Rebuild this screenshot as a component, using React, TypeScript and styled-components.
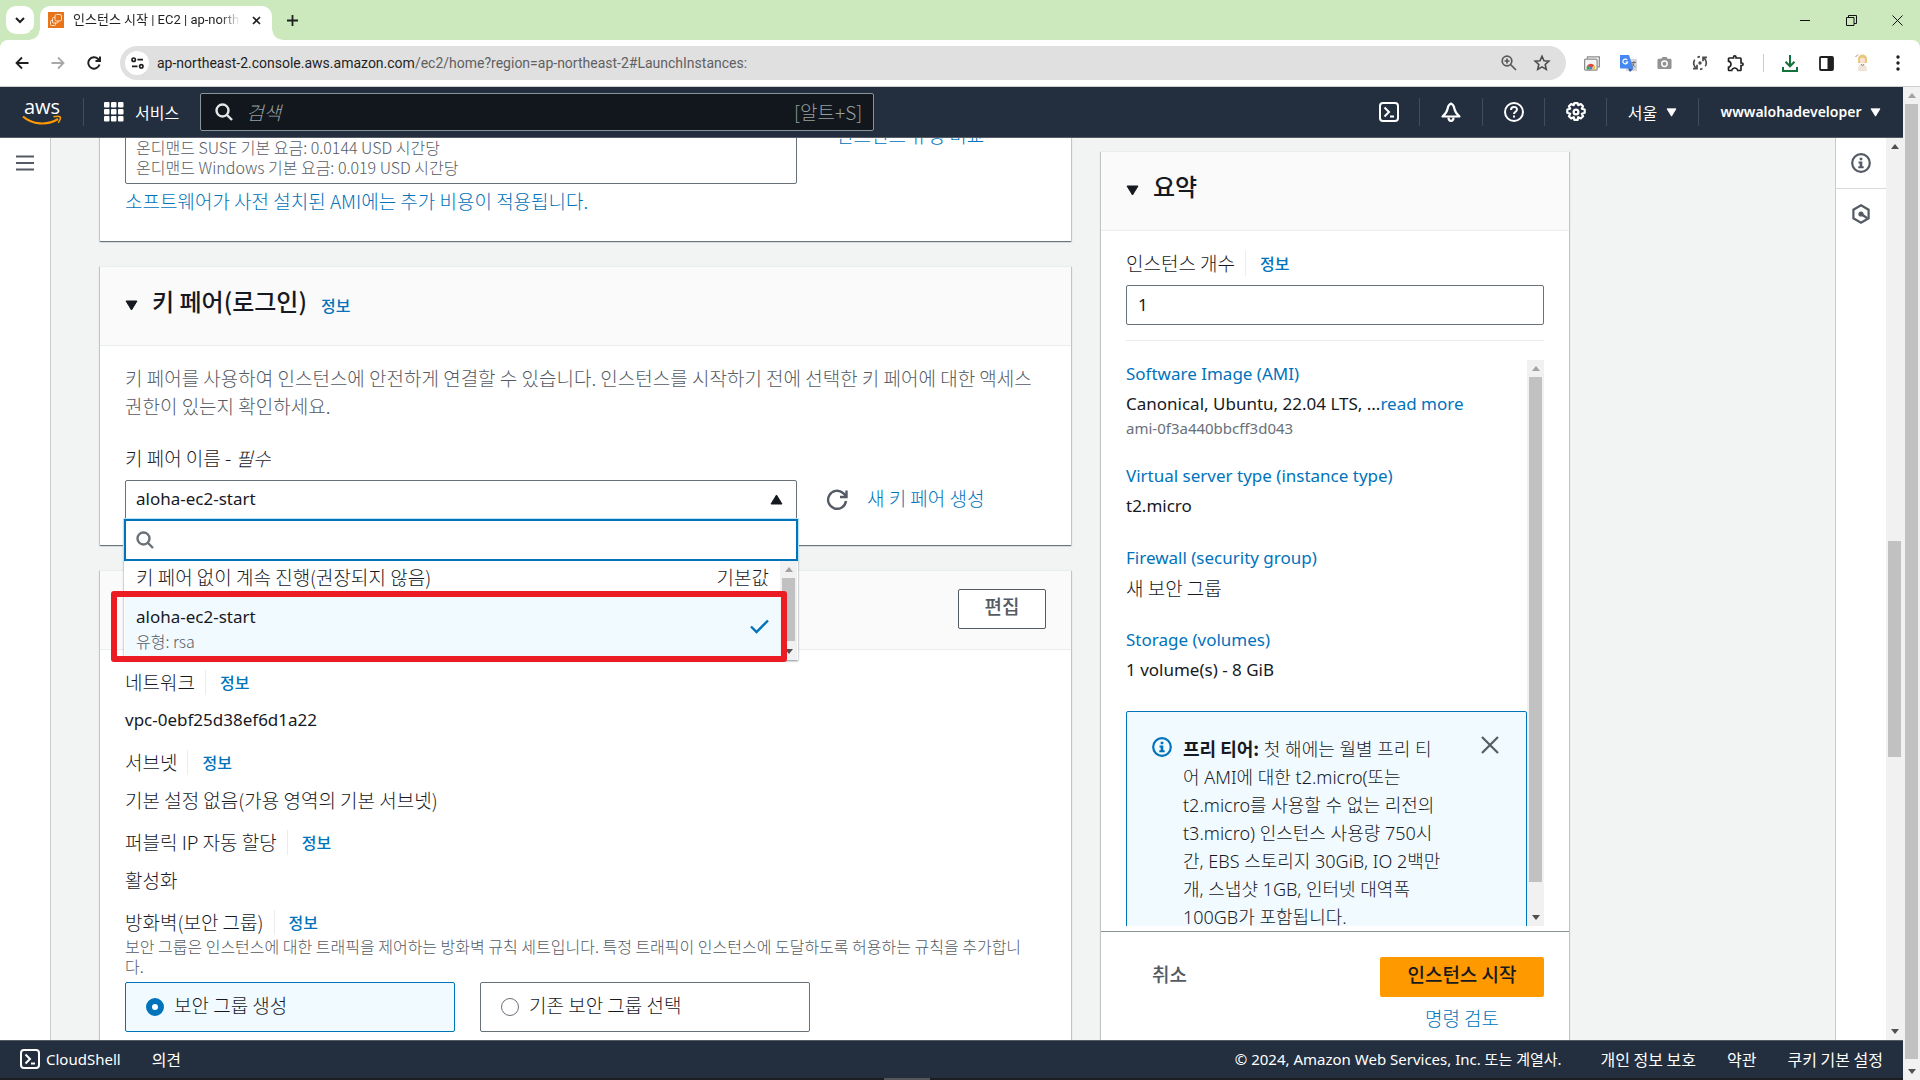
import React from 'react';
import styled, { createGlobalStyle, css } from 'styled-components';
import { MdOutlineExtension } from 'react-icons/md';

const latin = '"Noto Sans", "Noto Sans CJK KR", sans-serif';
const hangul = '"Noto Sans CJK KR", "Noto Sans", sans-serif';

const c = {
  ink: '#16191f',
  gray: '#545b64',
  soft: '#687078',
  link: '#0073bb',
  line: '#eaeded',
  nav: '#232f3e',
};

const GlobalStyle = createGlobalStyle`
  *, *::before, *::after { box-sizing: border-box; }
  body { margin: 0; background: #f2f3f3; color: ${c.ink}; font: 400 17px/28px ${latin}; }
  h2, p, ul, dl, dd { margin: 0; padding: 0; }
  a { color: ${c.link}; text-decoration: none; }
  button, input, select { font: inherit; color: inherit; }
  button { border: 0; background: none; padding: 0; cursor: pointer; }
  svg { display: block; flex: none; }
`;

const Window = styled.div`
  display: flex;
  flex-direction: column;
  height: 100vh;
  overflow: hidden;
`;

/* ---------- browser chrome ---------- */

const TabStrip = styled.div`
  display: flex;
  align-items: center;
  height: 40px;
  padding-left: 6px;
  background: #cbe9bd;
`;

const TabSearch = styled.button`
  display: grid;
  place-items: center;
  width: 28px;
  height: 28px;
  border-radius: 10px;
  background: #fff;
`;

const Tab = styled.div`
  position: relative;
  display: flex;
  align-items: center;
  align-self: flex-end;
  width: 232px;
  height: 34px;
  margin-left: 6px;
  padding: 0 6px 6px 8px;
  border-radius: 10px 10px 0 0;
  background: #fff;
  &::before, &::after {
    content: '';
    position: absolute;
    bottom: 0;
    width: 10px;
    height: 10px;
  }
  &::before { left: -10px; background: radial-gradient(circle at 0 0, #cbe9bd 9px, #fff 10px); }
  &::after { right: -10px; background: radial-gradient(circle at 100% 0, #cbe9bd 9px, #fff 10px); }
`;

const TabTitle = styled.span`
  flex: 1;
  margin: 0 6px 0 9px;
  overflow: hidden;
  white-space: nowrap;
  font: 400 13px/20px Roboto, "Noto Sans CJK KR", sans-serif;
  color: #1f1f1f;
  -webkit-mask-image: linear-gradient(90deg, #000 88%, transparent 100%);
  mask-image: linear-gradient(90deg, #000 88%, transparent 100%);
`;

const TabButton = styled.button`
  display: grid;
  place-items: center;
  width: 20px;
  height: 20px;
`;

const NewTab = styled(TabButton)`
  margin-left: 10px;
`;

const WindowButtons = styled.div`
  display: flex;
  margin-left: auto;
`;

const WindowButton = styled.button`
  display: grid;
  place-items: center;
  width: 46px;
  height: 40px;
`;

const ToolbarBack = styled.div`
  background: #cbe9bd;
`;

const Toolbar = styled.div`
  display: flex;
  align-items: center;
  height: 47px;
  padding: 0 4px;
  border-bottom: 1px solid #cfcfcf;
  border-radius: 8px 8px 0 0;
  background: #fff;
`;

const ToolButton = styled.button`
  display: grid;
  place-items: center;
  width: 36px;
  height: 34px;
`;

const ToolGroup = styled.div`
  display: flex;
  align-items: center;
`;

const Omnibox = styled.label`
  display: flex;
  align-items: center;
  flex: 1;
  height: 34px;
  margin: 0 8px;
  padding: 0 15px 0 5px;
  border-radius: 17px;
  background: #e0e0e0;
  gap: 8px;
`;

const SiteInfo = styled.span`
  display: grid;
  place-items: center;
  width: 24px;
  height: 24px;
  border-radius: 50%;
  background: #fff;
`;

const Url = styled.span`
  flex: 1;
  font: 400 14px/20px Roboto, sans-serif;
  color: #5f6062;
  b { font-weight: 400; color: #1f1f1f; }
`;

const OmniIcons = styled.span`
  display: flex;
  align-items: center;
  gap: 16px;
`;

const Divider = styled.span<{ $h: number; $color: string }>`
  flex: none;
  width: 1px;
  height: ${(p) => p.$h}px;
  background: ${(p) => p.$color};
`;

const ToolDivider = styled.span`
  display: grid;
  place-items: center;
  width: 18px;
`;

/* ---------- scroll bars ---------- */

const Track = styled.div`
  display: flex;
  flex-direction: column;
  flex: none;
  width: 17px;
  background: #f1f1f1;
`;

const TrackEnd = styled.span`
  display: grid;
  place-items: center;
  height: 17px;
`;

const TrackSpace = styled.span<{ $grow: number }>`
  flex: ${(p) => p.$grow} 0 0;
`;

const Thumb = styled.span<{ $grow: number }>`
  flex: ${(p) => p.$grow} 0 0;
  margin: 0 2px;
  background: #c1c1c1;
`;

function ScrollBar({ before, size, after, atTop }: { before: number; size: number; after: number; atTop?: boolean }) {
  return (
    <Track aria-hidden="true">
      <TrackEnd>
        <svg width="8" height="5"><path d="M0 5 4 0l4 5z" fill={atTop ? '#a3a3a3' : '#505050'} /></svg>
      </TrackEnd>
      <TrackSpace $grow={before} />
      <Thumb $grow={size} />
      <TrackSpace $grow={after} />
      <TrackEnd>
        <svg width="8" height="5"><path d="M0 0h8L4 5z" fill="#505050" /></svg>
      </TrackEnd>
    </Track>
  );
}

/* ---------- console frame ---------- */

const Page = styled.div`
  display: flex;
  flex: 1;
  min-height: 0;
`;

const Console = styled.div`
  display: flex;
  flex-direction: column;
  flex: 1;
  min-width: 0;
`;

const Nav = styled.header`
  display: flex;
  align-items: center;
  flex: none;
  height: 51px;
  padding-left: 22px;
  border-bottom: 1px solid #545b64;
  background: ${c.nav};
  color: #fff;
`;

const Logo = styled.a`
  display: flex;
  flex-direction: column;
  align-items: center;
  width: 40px;
  margin-right: 21px;
  color: #fff;
  font: 400 20px/16px "Open Sans", sans-serif;
`;

const Services = styled.button`
  display: flex;
  align-items: center;
  gap: 11px;
  margin: 0 21px 0 20px;
  font: 400 16px/24px ${hangul};
`;

const SearchBox = styled.label`
  display: flex;
  align-items: center;
  width: 674px;
  height: 38px;
  padding: 0 11px 0 14px;
  border: 1px solid #879596;
  border-radius: 2px;
  background: #12171d;
  color: #95a0a0;
  font: 300 19px/28px ${hangul};
  input {
    flex: 1;
    min-width: 0;
    margin-left: 13px;
    padding: 0;
    border: 0;
    outline: 0;
    background: none;
  }
  input::placeholder { color: #95a0a0; font-style: italic; opacity: 1; }
`;

const Hint = styled.span`
  font: 300 19px/28px ${hangul};
`;

const NavRight = styled.div`
  display: flex;
  align-items: center;
  margin-left: auto;
`;

const NavItem = styled.button<{ $w: number }>`
  display: flex;
  align-items: center;
  justify-content: center;
  gap: 9px;
  width: ${(p) => p.$w}px;
  height: 50px;
  font: 600 14px/24px ${latin};
`;

const Place = styled.span`
  font: 400 16px/24px ${hangul};
`;

const Main = styled.main`
  display: flex;
  flex: 1;
  min-height: 0;
`;

const Rail = styled.aside<{ $side: 'left' | 'right' }>`
  display: flex;
  flex-direction: column;
  flex: none;
  width: 51px;
  background: #fff;
  border: 0 solid #c9cccc;
  ${(p) => (p.$side === 'left' ? css`border-right-width: 1px;` : css`border-left-width: 1px;`)}
`;

const RailButton = styled.button`
  display: grid;
  place-items: center;
  height: 50px;
  & + & { border-top: 1px solid #d5dbdb; }
`;

const Content = styled.div`
  flex: 1;
  min-width: 0;
  overflow: hidden;
  padding-left: 49px;
`;

const Columns = styled.div`
  display: grid;
  grid-template-columns: minmax(0, 1fr) 468px;
  grid-template-rows: minmax(0, 1fr);
  gap: 30px;
  max-width: 1469px;
  height: 100%;
`;

/* the form column is shown already scrolled past its first rows */
const FormColumn = styled.div`
  display: flex;
  flex-direction: column;
  gap: 25px;
  margin-top: -18px;
`;

const cardEdge = css`
  border-top: 1px solid ${c.line};
  background: #fff;
  box-shadow: 0 1px 1px rgba(0, 28, 36, 0.4), 1px 1px 1px rgba(0, 28, 36, 0.15), -1px 1px 1px rgba(0, 28, 36, 0.15);
`;

const Card = styled.section`
  ${cardEdge}
`;

const CardHead = styled.div`
  display: flex;
  align-items: center;
  flex: none;
  height: 79px;
  padding: 0 25px 2px;
  border-bottom: 1px solid ${c.line};
  background: #fafafa;
`;

const CardTitle = styled.h2`
  margin: 0 14px;
  padding-bottom: 8px;
  font: 500 24px/32px ${hangul};
`;

const Info = styled.a`
  font: 500 16px/24px ${hangul};
`;

const Ko = styled.span`
  font: 300 19px/28px ${hangul};
`;

const KoLink = styled.a`
  font: 300 19px/28px ${hangul};
`;

const Small = styled.span`
  display: block;
  color: ${c.soft};
  font: 400 15px/20px ${latin};
`;

const SmallKo = styled(Small)`
  color: ${c.gray};
  font: 300 16px/20px ${hangul};
`;

const TypeBody = styled.div`
  display: grid;
  grid-template-columns: 672px 1fr;
  column-gap: 39px;
  padding: 0 25px 26px;
`;

const PriceBox = styled.div`
  margin-bottom: 3px;
  padding: 15px 9px 6px 10px;
  border: 1px solid #687078;
  border-radius: 2px;
`;

const KeyBody = styled.div`
  padding: 18px 25px 25px;
`;

const Lead = styled.p`
  color: ${c.gray};
  font: 300 19px/28px ${hangul};
`;

const FieldLabel = styled.label`
  display: block;
  margin-top: 24px;
  margin-bottom: 8px;
  font: 300 19px/28px ${hangul};
`;

const KeyRow = styled.div`
  display: flex;
  align-items: center;
  gap: 19px;
  ${KoLink} { padding-bottom: 5px; }
`;

const SelectWrap = styled.div`
  position: relative;
  width: 672px;
`;

const Select = styled.select`
  display: block;
  width: 100%;
  height: 40px;
  padding: 0 10px 2px;
  border: 1px solid #687078;
  border-radius: 2px;
  appearance: none;
  background: #fff;
  outline: 0;
`;

const SelectCaret = styled.svg`
  position: absolute;
  top: 14px;
  right: 14px;
`;

const Menu = styled.div`
  position: absolute;
  z-index: 2;
  top: 39px;
  left: -1px;
  right: -1px;
  background: #fff;
  box-shadow: 0 1px 2px rgba(0, 28, 36, 0.5);
`;

const Filter = styled.label`
  display: flex;
  align-items: center;
  height: 42px;
  padding-left: 10px;
  border: 2px solid #0073bb;
  box-shadow: 0 0 0 1px #b9e3f7;
  input { flex: 1; border: 0; outline: 0; background: none; }
`;

const MenuList = styled.div`
  display: flex;
  height: 99px;
  padding: 0 1px;
`;

const Options = styled.div`
  flex: 1;
`;

const Option = styled.div<{ $selected?: boolean }>`
  display: flex;
  align-items: center;
  justify-content: space-between;
  height: ${(p) => (p.$selected ? 67 : 32)}px;
  padding: 0 11px;
  background: ${(p) => (p.$selected ? '#f1faff' : '#fff')};
`;

const Marker = styled.div`
  position: absolute;
  z-index: 3;
  top: 111px;
  left: -14px;
  width: 676px;
  height: 71px;
  border: 6px solid #eb1c24;
  border-radius: 3px;
`;

const IconButton = styled.button`
  display: grid;
  place-items: center;
  margin-left: 10px;
`;

const EditButton = styled.button`
  margin-left: auto;
  width: 88px;
  height: 40px;
  padding-bottom: 6px;
  border: 1px solid ${c.gray};
  border-radius: 2px;
  background: #fff;
  color: ${c.gray};
  font: 500 19px/28px ${hangul};
`;

const NetBody = styled.div`
  padding: 18px 25px;
`;

const Pair = styled.dl`
  margin-bottom: 14px;
  dd { display: flex; margin-top: 10px; }
`;

const Term = styled.dt`
  display: flex;
  align-items: center;
  height: 28px;
  gap: 10px;
  ${Info} { margin-left: 4px; }
`;

const Tiles = styled.div`
  display: grid;
  grid-template-columns: 330px 330px;
  gap: 25px;
  margin-top: 6px;
`;

const Tile = styled.label<{ $on?: boolean }>`
  display: flex;
  align-items: center;
  gap: 10px;
  height: 50px;
  padding: 0 20px;
  border: 1px solid ${(p) => (p.$on ? c.link : '#687078')};
  border-radius: 2px;
  background: ${(p) => (p.$on ? '#f1faff' : '#fff')};
  input {
    appearance: none;
    width: 18px;
    height: 18px;
    margin: 0;
    border: ${(p) => (p.$on ? `6px solid ${c.link}` : '1px solid #687078')};
    border-radius: 50%;
    background: #fff;
  }
  ${Ko} { padding-bottom: 4px; }
`;

/* ---------- summary ---------- */

const Summary = styled.section`
  display: flex;
  flex-direction: column;
  min-height: 0;
  margin-top: 13px;
  ${cardEdge}
`;

const SummaryBody = styled.div`
  display: flex;
  flex-direction: column;
  flex: 1;
  min-height: 0;
  padding: 18px 25px 5px;
  border-bottom: 1px solid #879596;
`;

const CountInput = styled.input`
  flex: none;
  width: 100%;
  height: 40px;
  margin-top: 8px;
  padding: 0 11px 2px;
  border: 1px solid #687078;
  border-radius: 2px;
  outline: 0;
`;

const Rule = styled.div`
  flex: none;
  height: 1px;
  margin: 15px 0 19px;
  background: ${c.line};
`;

const Scroller = styled.div`
  display: flex;
  flex: 1;
  min-height: 0;
`;

const Details = styled.div`
  flex: 1;
  min-width: 0;
  overflow: hidden;
`;

const Detail = styled.div`
  display: flex;
  flex-direction: column;
  margin-bottom: 24px;
  > a { margin-bottom: 2px; }
`;

const Alert = styled.div`
  display: flex;
  align-items: flex-start;
  margin-top: 27px;
  height: 240px;
  padding: 22px 25px;
  border: 1px solid ${c.link};
  border-radius: 2px;
  background: #f1faff;
  p {
    flex: 1;
    margin-left: 11px;
    white-space: nowrap;
    font: 300 18px/28px ${latin};
  }
  strong { font: 700 18px/28px ${hangul}; }
`;

const AlertIcon = styled.svg`
  margin-top: 3px;
`;

const Actions = styled.div`
  display: flex;
  align-items: flex-start;
  justify-content: space-between;
  flex: none;
  height: 108px;
  padding: 25px 25px 0;
`;

const Cancel = styled.button`
  height: 36px;
  padding: 0 26px 2px;
  color: ${c.gray};
  font: 500 19px/28px ${hangul};
`;

const Launch = styled.div`
  display: flex;
  flex-direction: column;
  align-items: center;
  gap: 7px;
`;

const LaunchButton = styled.button`
  width: 164px;
  height: 40px;
  padding-bottom: 6px;
  border-radius: 2px;
  background: #ff9900;
  font: 500 19px/28px ${hangul};
`;

/* ---------- footer ---------- */

const Footer = styled.footer`
  display: flex;
  align-items: center;
  flex: none;
  height: 38px;
  padding: 0 20px 2px;
  border-top: 1px solid #545b64;
  background: ${c.nav};
  color: #fff;
  font: 400 15px/24px ${latin};
  a { color: inherit; margin-left: 31px; font: 400 16px/24px ${hangul}; }
`;

const Shell = styled.button`
  display: flex;
  align-items: center;
  gap: 6px;
`;

const Copyright = styled.span`
  margin-left: auto;
  margin-right: 8px;
`;

const TaskEdge = styled.div`
  display: flex;
  flex: none;
  justify-content: center;
  height: 2px;
  background: #1c1d22;
  span { width: 46px; margin-right: 90px; background: #55565a; }
`;

/* ---------- icons ---------- */

const Caret = ({ color = '#16191f', w = 13 }: { color?: string; w?: number }) => (
  <svg width={w} height={w - 2} viewBox="0 0 13 11">
    <path d="M1 1h11L6.500 10z" fill={color} stroke={color} strokeLinejoin="round" />
  </svg>
);

const ShellIcon = () => (
  <svg width="20" height="20" viewBox="0 0 20 20" fill="none" stroke="#fff" strokeWidth="2">
    <rect x="1" y="1" width="18" height="18" rx="3" />
    <path d="m5.500 5.500 4.500 4.500-4.500 4.500M11 14.500h4" />
  </svg>
);

const SearchIcon = ({ color }: { color: string }) => (
  <svg width="18" height="18" viewBox="0 0 18 18" fill="none" stroke={color} strokeWidth="2.400">
    <circle cx="7.500" cy="7.500" r="6" />
    <path d="m12 12 5 5" />
  </svg>
);

const InfoIcon = ({ color }: { color: string }) => (
  <>
    <circle cx="10" cy="10" r="8.800" fill="none" stroke={color} strokeWidth="2.200" />
    <path d="M8.700 4.800h2.600v2.400H8.700zM7.500 8.500h3.800v4.800h1.400v1.900H7.300v-1.900h1.400v-2.900H7.500z" fill={color} />
  </>
);

const InfoLink = () => <Info href="#info">정보</Info>;

function InfoTerm({ children }: { children: React.ReactNode }) {
  return (
    <Term>
      <Ko>{children}</Ko>
      <Divider $h={25} $color="#eaeded" />
      <InfoLink />
    </Term>
  );
}

/* ---------- sections ---------- */

function BrowserChrome() {
  return (
    <>
      <TabStrip>
        <TabSearch aria-label="탭 검색">
          <svg width="10" height="7" fill="none" stroke="#1f1f1f" strokeWidth="2"><path d="m1 1 4 4 4-4" /></svg>
        </TabSearch>
        <Tab>
          <svg width="16" height="16" viewBox="0 0 16 16">
            <rect width="16" height="16" fill="#e8741a" />
            <g fill="none" stroke="#ffe3c7" strokeWidth="1">
              <rect x="7" y="2.500" width="6.500" height="6.500" rx="1.500" />
              <path d="M7 5.500H5.500a1 1 0 0 0-1 1V10a1 1 0 0 0 1 1H9a1 1 0 0 0 1-1V9M4.500 8.500h-1a1 1 0 0 0-1 1v3a1 1 0 0 0 1 1h3a1 1 0 0 0 1-1V11" />
            </g>
          </svg>
          <TabTitle>인스턴스 시작 | EC2 | ap-northeast-2</TabTitle>
          <TabButton aria-label="탭 닫기">
            <svg width="9" height="9" stroke="#1f1f1f" strokeWidth="1.600"><path d="m1 1 7 7M8 1 1 8" /></svg>
          </TabButton>
        </Tab>
        <NewTab aria-label="새 탭">
          <svg width="11" height="11" stroke="#1f1f1f" strokeWidth="1.800"><path d="M5.500 0v11M0 5.500h11" /></svg>
        </NewTab>
        <WindowButtons>
          <WindowButton aria-label="최소화">
            <svg width="10" height="10" stroke="#111"><path d="M0 5.500h10" /></svg>
          </WindowButton>
          <WindowButton aria-label="이전 크기로">
            <svg width="11" height="11" fill="none" stroke="#111"><path d="M.5 2.500h7.500v8H.5zM2.500 2.500v-2h8v8H8" /></svg>
          </WindowButton>
          <WindowButton aria-label="닫기">
            <svg width="11" height="11" stroke="#111"><path d="m.5.5 10 10M10.500.5l-10 10" /></svg>
          </WindowButton>
        </WindowButtons>
      </TabStrip>
      <ToolbarBack>
        <Toolbar>
          <ToolGroup>
            <ToolButton aria-label="뒤로">
              <svg width="14" height="14" fill="none" stroke="#1f1f1f" strokeWidth="1.800"><path d="M13.500 7H2M7 1.500 1.500 7 7 12.500" /></svg>
            </ToolButton>
            <ToolButton aria-label="앞으로">
              <svg width="14" height="14" fill="none" stroke="#a8a8a8" strokeWidth="1.800"><path d="M.5 7H12M7 1.500 12.500 7 7 12.500" /></svg>
            </ToolButton>
            <ToolButton aria-label="새로고침">
              <svg width="14" height="14" fill="none" stroke="#1f1f1f" strokeWidth="1.900"><path d="M12.500 8.500a5.700 5.700 0 1 1-1.400-5.500L12.500 4.500M13 .5v4.500H8.500" /></svg>
            </ToolButton>
          </ToolGroup>
          <Omnibox>
            <SiteInfo>
              <svg width="13" height="12" fill="none" stroke="#1f1f1f" strokeWidth="1.700"><circle cx="2.700" cy="2.700" r="1.700" /><path d="M6.500 2.700H12M1 9.300h5.500" /><circle cx="10.300" cy="9.300" r="1.700" /></svg>
            </SiteInfo>
            <Url><b>ap-northeast-2.console.aws.amazon.com</b>/ec2/home?region=ap-northeast-2#LaunchInstances:</Url>
            <OmniIcons>
              <svg width="16" height="16" fill="none" stroke="#5a5a5a" strokeWidth="1.700"><circle cx="6" cy="6" r="4.800" /><path d="m9.500 9.500 5.500 5.500M3.500 6h5M6 3.500v5" /></svg>
              <svg width="18" height="18" viewBox="0 0 18 18" fill="none" stroke="#4d4d4d" strokeWidth="1.600"><path d="m9 2.200 2 4.600 4.900.4-3.700 3.300 1.100 4.900L9 12.900l-4.300 2.500 1.100-4.900-3.700-3.300 4.900-.4z" /></svg>
            </OmniIcons>
          </Omnibox>
          <ToolGroup>
            <ToolButton aria-label="스크린샷 기록">
              <svg width="16" height="15" viewBox="0 0 16 15" fill="none"><path d="M3.500 2.500V.8h11.800v10h-2" stroke="#8b8b8b" strokeWidth="1.300" /><rect x=".6" y="3.200" width="12.500" height="11" rx="1" fill="#f4f4f4" stroke="#8b8b8b" strokeWidth="1.200" /><path d="M2.800 13.600a4.200 4.200 0 0 1 1-4.500l2.500 4.500z" fill="#3b9b4b" /><path d="M3.500 9.200a4.500 4.500 0 0 1 6.800 0l-2 2.300H5.500z" fill="#dd4a3a" /><path d="M10.300 9.200a4.200 4.200 0 0 1 .8 4.400H7.500z" fill="#f2c13b" /><circle cx="6.900" cy="12" r="1.500" fill="#4a7fe0" /></svg>
            </ToolButton>
            <ToolButton aria-label="번역">
              <svg width="17" height="17" viewBox="0 0 17 17"><rect x="6" y="4" width="11" height="12" fill="#d5d7da" /><path d="M0 0h9l4.500 13.500H1a1 1 0 0 1-1-1z" fill="#4688f1" /><path d="m8 13.500 2 3.500 3.500-3.500z" fill="#2d5bb8" /><path d="M7.200 5A2.400 2.400 0 1 0 7.600 7H5.500" fill="none" stroke="#fff" strokeWidth="1.200" /><path d="M11.500 7.500H16M14 6v1.500c0 2-1 3.500-2 4.300M12.500 8.500c.5 1.600 1.500 2.700 3 3.500" fill="none" stroke="#6b7075" /></svg>
            </ToolButton>
            <ToolButton aria-label="캡처">
              <svg width="15" height="14" viewBox="0 0 16 14"><path d="M2 2.500h2.500L6 .5h4l1.500 2H14a1.500 1.500 0 0 1 1.500 1.500v8a1.500 1.500 0 0 1-1.500 1.500H2A1.500 1.500 0 0 1 .5 12V4A1.500 1.500 0 0 1 2 2.500z" fill="#929292" /><circle cx="8" cy="7.800" r="2.900" fill="none" stroke="#fff" strokeWidth="1.600" /></svg>
            </ToolButton>
            <ToolButton aria-label="동기화">
              <svg width="16" height="16" viewBox="0 0 16 16" fill="none" stroke="#4d4d4d" strokeWidth="1.700"><path d="M4.500 13.300A6.300 6.300 0 0 1 2.700 4.600M11.500 2.700a6.300 6.300 0 0 1 1.800 8.700M1 13.700h4V9.800M15 2.300h-4v3.900M5.500 2.400A6.300 6.300 0 0 1 8 1.700M10.500 13.600a6.300 6.300 0 0 1-2.500.7" /><circle cx="8" cy="8" r="1.700" fill="#4d4d4d" stroke="none" /></svg>
            </ToolButton>
            <ToolButton aria-label="확장 프로그램">
              <MdOutlineExtension size={20} color="#1f1f1f" />
            </ToolButton>
            <ToolDivider><Divider $h={18} $color="#b9dfa6" /></ToolDivider>
            <ToolButton aria-label="다운로드">
              <svg width="16" height="17" viewBox="0 0 16 17" fill="none" stroke="#13713a" strokeWidth="2"><path d="M8 0v11M3.500 6.800 8 11.300l4.500-4.500M1 12v4h14v-4" /></svg>
            </ToolButton>
            <ToolButton aria-label="사이드 패널">
              <svg width="15" height="15" viewBox="0 0 15 15"><rect x="1" y="1" width="13" height="13" rx="1" fill="#fff" stroke="#1f1f1f" strokeWidth="1.800" /><path d="M8.500 1H14v13H8.500z" fill="#1f1f1f" /></svg>
            </ToolButton>
            <ToolButton aria-label="프로필">
              <svg width="14" height="18" viewBox="0 0 14 18"><path d="M3 17c0-5 1-7 4-7s5 2 5 7z" fill="#efe4da" /><path d="M3 5c0-6 9-6 9 0v4H3z" fill="#e6c87c" /><ellipse cx="7.500" cy="6.500" rx="2.700" ry="3" fill="#fbe0cf" /><path d="M.5 3 3 .5M6 10l1.500 2L9 10" stroke="#9c8c7c" fill="none" /></svg>
            </ToolButton>
            <ToolButton aria-label="메뉴">
              <svg width="4" height="18" fill="#1f1f1f"><circle cx="2" cy="3" r="1.700" /><circle cx="2" cy="9" r="1.700" /><circle cx="2" cy="15" r="1.700" /></svg>
            </ToolButton>
          </ToolGroup>
        </Toolbar>
      </ToolbarBack>
    </>
  );
}

function ConsoleNav() {
  return (
    <Nav>
      <Logo href="#home">
        aws
        <svg width="40" height="11" viewBox="0 0 40 11" fill="none" stroke="#f90" strokeWidth="2.200">
          <path d="M1 1.500C10 9.500 25 11 36 4" />
          <path d="M31.500 1.800c2.500-.6 5.500-.8 6.500 0 .8 1-.3 4-1.800 6" strokeWidth="1.600" />
        </svg>
      </Logo>
      <Divider $h={28} $color="#414d5c" />
      <Services>
        <svg width="20" height="20" viewBox="0 0 20 20" fill="#fff">
          {[0, 7, 14].map((y) => [0, 7, 14].map((x) => <rect key={`${x}-${y}`} x={x} y={y} width="5.500" height="5.500" rx="1" />))}
        </svg>
        서비스
      </Services>
      <SearchBox>
        <SearchIcon color="#e4e8e8" />
        <input type="search" placeholder="검색" aria-label="검색" />
        <Hint>[알트+S]</Hint>
      </SearchBox>
      <NavRight>
        <NavItem $w={61} aria-label="CloudShell"><ShellIcon /></NavItem>
        <Divider $h={28} $color="#414d5c" />
        <NavItem $w={62} aria-label="알림">
          <svg width="20" height="20" viewBox="0 0 20 20" fill="none" stroke="#fff" strokeWidth="2.200" strokeLinejoin="round"><path d="M10 1.500C7.500 2.500 7 4 6.500 7c-.5 3-1.500 4.500-5 7.500h17c-3.500-3-4.500-4.500-5-7.500-.5-3-1-4.500-3.500-5.500z" /><path d="M7.500 15.500c0 4.500 5 4.500 5 0" /></svg>
        </NavItem>
        <Divider $h={28} $color="#414d5c" />
        <NavItem $w={61} aria-label="도움말">
          <svg width="20" height="20" viewBox="0 0 20 20" fill="none" stroke="#fff" strokeWidth="2"><circle cx="10" cy="10" r="9" /><path d="M7 8c0-4 6-4 6-.5 0 2.200-3 2.200-3 4.500M10 13.500v2" /></svg>
        </NavItem>
        <Divider $h={28} $color="#414d5c" />
        <NavItem $w={61} aria-label="설정">
          <svg width="20" height="20" viewBox="0 0 20 20" fill="none" stroke="#fff" strokeWidth="2.200" strokeLinejoin="round"><path d="m8.400 1.200 3.200 0 .6 2 2.600-1.200 2.200 2.200-1.200 2.500 2.900.8v3.300l-2.900.9 1.300 2.500-2.300 2.200-2.600-1.200-.6 2.700H8.400l-.7-2.700-2.500 1.200-2.300-2.200 1.300-2.500-2.900-.9V7.500l2.900-.8-1.300-2.500 2.300-2.200 2.500 1.200z" /><circle cx="10" cy="10" r="2.400" /></svg>
        </NavItem>
        <Divider $h={28} $color="#414d5c" />
        <NavItem $w={91}><Place>서울</Place><Caret color="#fff" w={11} /></NavItem>
        <Divider $h={28} $color="#414d5c" />
        <NavItem $w={204}>wwwalohadeveloper<Caret color="#fff" w={11} /></NavItem>
      </NavRight>
    </Nav>
  );
}

function KeyPairCard() {
  return (
    <Card>
      <CardHead>
        <Caret />
        <CardTitle>키 페어(로그인)</CardTitle>
        <InfoLink />
      </CardHead>
      <KeyBody>
        <Lead>
          키 페어를 사용하여 인스턴스에 안전하게 연결할 수 있습니다. 인스턴스를 시작하기 전에 선택한 키 페어에 대한 액세스 권한이 있는지 확인하세요.
        </Lead>
        <FieldLabel htmlFor="key-pair">키 페어 이름 - <em>필수</em></FieldLabel>
        <KeyRow>
          <SelectWrap>
            <Select id="key-pair" defaultValue="start">
              <option value="start">aloha-ec2-start</option>
            </Select>
            <SelectCaret width="13" height="11" viewBox="0 0 13 11"><path d="M1 10h11L6.500 1z" fill="#16191f" stroke="#16191f" strokeLinejoin="round" /></SelectCaret>
            <Menu>
              <Filter>
                <SearchIcon color="#687078" />
                <input type="text" aria-label="키 페어 찾기" />
              </Filter>
              <MenuList>
                <Options role="listbox">
                  <Option role="option">
                    <Ko>키 페어 없이 계속 진행(권장되지 않음)</Ko>
                    <Ko>기본값</Ko>
                  </Option>
                  <Option role="option" aria-selected="true" $selected>
                    <div>
                      aloha-ec2-start
                      <SmallKo>유형: rsa</SmallKo>
                    </div>
                    <svg width="19" height="15" fill="none" stroke="#0073bb" strokeWidth="2.400"><path d="m1 7.500 5.500 5.500L18 1.500" /></svg>
                  </Option>
                </Options>
                <ScrollBar before={0} size={64} after={2} atTop />
              </MenuList>
            </Menu>
            <Marker />
          </SelectWrap>
          <IconButton aria-label="새로 고침">
            <svg width="22" height="22" viewBox="0 0 22 22" fill="none" stroke="#545b64" strokeWidth="2.400"><path d="M20 12a9 9 0 1 1-3-8l3 3M20.500 1.500V8H14" /></svg>
          </IconButton>
          <KoLink href="#new-key-pair">새 키 페어 생성</KoLink>
        </KeyRow>
      </KeyBody>
    </Card>
  );
}

function NetworkCard() {
  return (
    <Card>
      <CardHead>
        <EditButton>편집</EditButton>
      </CardHead>
      <NetBody>
        <Pair>
          <InfoTerm>네트워크</InfoTerm>
          <dd>vpc-0ebf25d38ef6d1a22</dd>
        </Pair>
        <Pair>
          <InfoTerm>서브넷</InfoTerm>
          <dd><Ko>기본 설정 없음(가용 영역의 기본 서브넷)</Ko></dd>
        </Pair>
        <Pair>
          <InfoTerm>퍼블릭 IP 자동 할당</InfoTerm>
          <dd><Ko>활성화</Ko></dd>
        </Pair>
        <InfoTerm>방화벽(보안 그룹)</InfoTerm>
        <SmallKo>
          보안 그룹은 인스턴스에 대한 트래픽을 제어하는 방화벽 규칙 세트입니다. 특정 트래픽이 인스턴스에 도달하도록 허용하는 규칙을 추가합니<br />다.
        </SmallKo>
        <Tiles>
          <Tile $on>
            <input type="radio" name="group" defaultChecked />
            <Ko>보안 그룹 생성</Ko>
          </Tile>
          <Tile>
            <input type="radio" name="group" />
            <Ko>기존 보안 그룹 선택</Ko>
          </Tile>
        </Tiles>
      </NetBody>
    </Card>
  );
}

function SummaryPanel() {
  return (
    <Summary>
      <CardHead>
        <Caret />
        <CardTitle>요약</CardTitle>
      </CardHead>
      <SummaryBody>
        <Term as="div">
          <Ko as="label" htmlFor="count">인스턴스 개수</Ko>
          <Divider $h={25} $color="#eaeded" />
          <InfoLink />
        </Term>
        <CountInput id="count" type="text" defaultValue="1" />
        <Rule />
        <Scroller>
          <Details>
            <Detail>
              <a href="#ami">Software Image (AMI)</a>
              <span>Canonical, Ubuntu, 22.04 LTS, ...<a href="#more">read more</a></span>
              <Small>ami-0f3a440bbcff3d043</Small>
            </Detail>
            <Detail>
              <a href="#type">Virtual server type (instance type)</a>
              <span>t2.micro</span>
            </Detail>
            <Detail>
              <a href="#firewall">Firewall (security group)</a>
              <Ko>새 보안 그룹</Ko>
            </Detail>
            <Detail>
              <a href="#storage">Storage (volumes)</a>
              <span>1 volume(s) - 8 GiB</span>
            </Detail>
            <Alert>
              <AlertIcon width="20" height="20" viewBox="0 0 20 20"><InfoIcon color="#0073bb" /></AlertIcon>
              <p>
                <strong>프리 티어:</strong> 첫 해에는 월별 프리 티<br />
                어 AMI에 대한 t2.micro(또는<br />
                t2.micro를 사용할 수 없는 리전의<br />
                t3.micro) 인스턴스 사용량 750시<br />
                간, EBS 스토리지 30GiB, IO 2백만<br />
                개, 스냅샷 1GB, 인터넷 대역폭<br />
                100GB가 포함됩니다.
              </p>
              <button aria-label="닫기">
                <svg width="22" height="22" viewBox="0 0 22 22" stroke="#545b64" strokeWidth="2.200"><path d="m3 3 16 16M19 3 3 19" /></svg>
              </button>
            </Alert>
          </Details>
          <ScrollBar before={0} size={504} after={27} atTop />
        </Scroller>
      </SummaryBody>
      <Actions>
        <Cancel>취소</Cancel>
        <Launch>
          <LaunchButton>인스턴스 시작</LaunchButton>
          <KoLink href="#review">명령 검토</KoLink>
        </Launch>
      </Actions>
    </Summary>
  );
}

export default function App() {
  return (
    <Window>
      <GlobalStyle />
      <BrowserChrome />
      <Page>
        <Console>
          <ConsoleNav />
          <Main>
            <Rail $side="left">
              <RailButton aria-label="탐색 열기">
                <svg width="18" height="16" stroke="#545b64" strokeWidth="2.200"><path d="M0 1.500h18M0 8h18M0 14.500h18" /></svg>
              </RailButton>
            </Rail>
            <Content>
              <Columns>
                <FormColumn>
                  <Card>
                    <TypeBody>
                      <PriceBox>
                        <SmallKo>온디맨드 SUSE 기본 요금: 0.0144 USD 시간당</SmallKo>
                        <SmallKo>온디맨드 Windows 기본 요금: 0.019 USD 시간당</SmallKo>
                      </PriceBox>
                      <KoLink href="#compare">인스턴스 유형 비교</KoLink>
                      <KoLink href="#cost">소프트웨어가 사전 설치된 AMI에는 추가 비용이 적용됩니다.</KoLink>
                    </TypeBody>
                  </Card>
                  <KeyPairCard />
                  <NetworkCard />
                </FormColumn>
                <SummaryPanel />
              </Columns>
            </Content>
            <Rail $side="right">
              <RailButton aria-label="정보">
                <svg width="20" height="20" viewBox="0 0 20 20"><InfoIcon color="#545b64" /></svg>
              </RailButton>
              <RailButton aria-label="자습서">
                <svg width="20" height="20" viewBox="0 0 20 20" fill="none" stroke="#545b64" strokeWidth="2.200"><path d="m10 1.300 7.600 4.400v8.600L10 18.700l-7.600-4.400V5.700z" /><circle cx="10" cy="10" r="2.600" fill="#545b64" stroke="none" /><path d="m10 10 6 4" /></svg>
              </RailButton>
            </Rail>
            <ScrollBar before={386} size={217} after={266} />
          </Main>
          <Footer>
            <Shell><ShellIcon />CloudShell</Shell>
            <a href="#feedback">의견</a>
            <Copyright>© 2024, Amazon Web Services, Inc. 또는 계열사.</Copyright>
            <a href="#privacy">개인 정보 보호</a>
            <a href="#terms">약관</a>
            <a href="#cookies">쿠키 기본 설정</a>
          </Footer>
          <TaskEdge><span /></TaskEdge>
        </Console>
        <ScrollBar before={0} size={955} after={4} atTop />
      </Page>
    </Window>
  );
}
